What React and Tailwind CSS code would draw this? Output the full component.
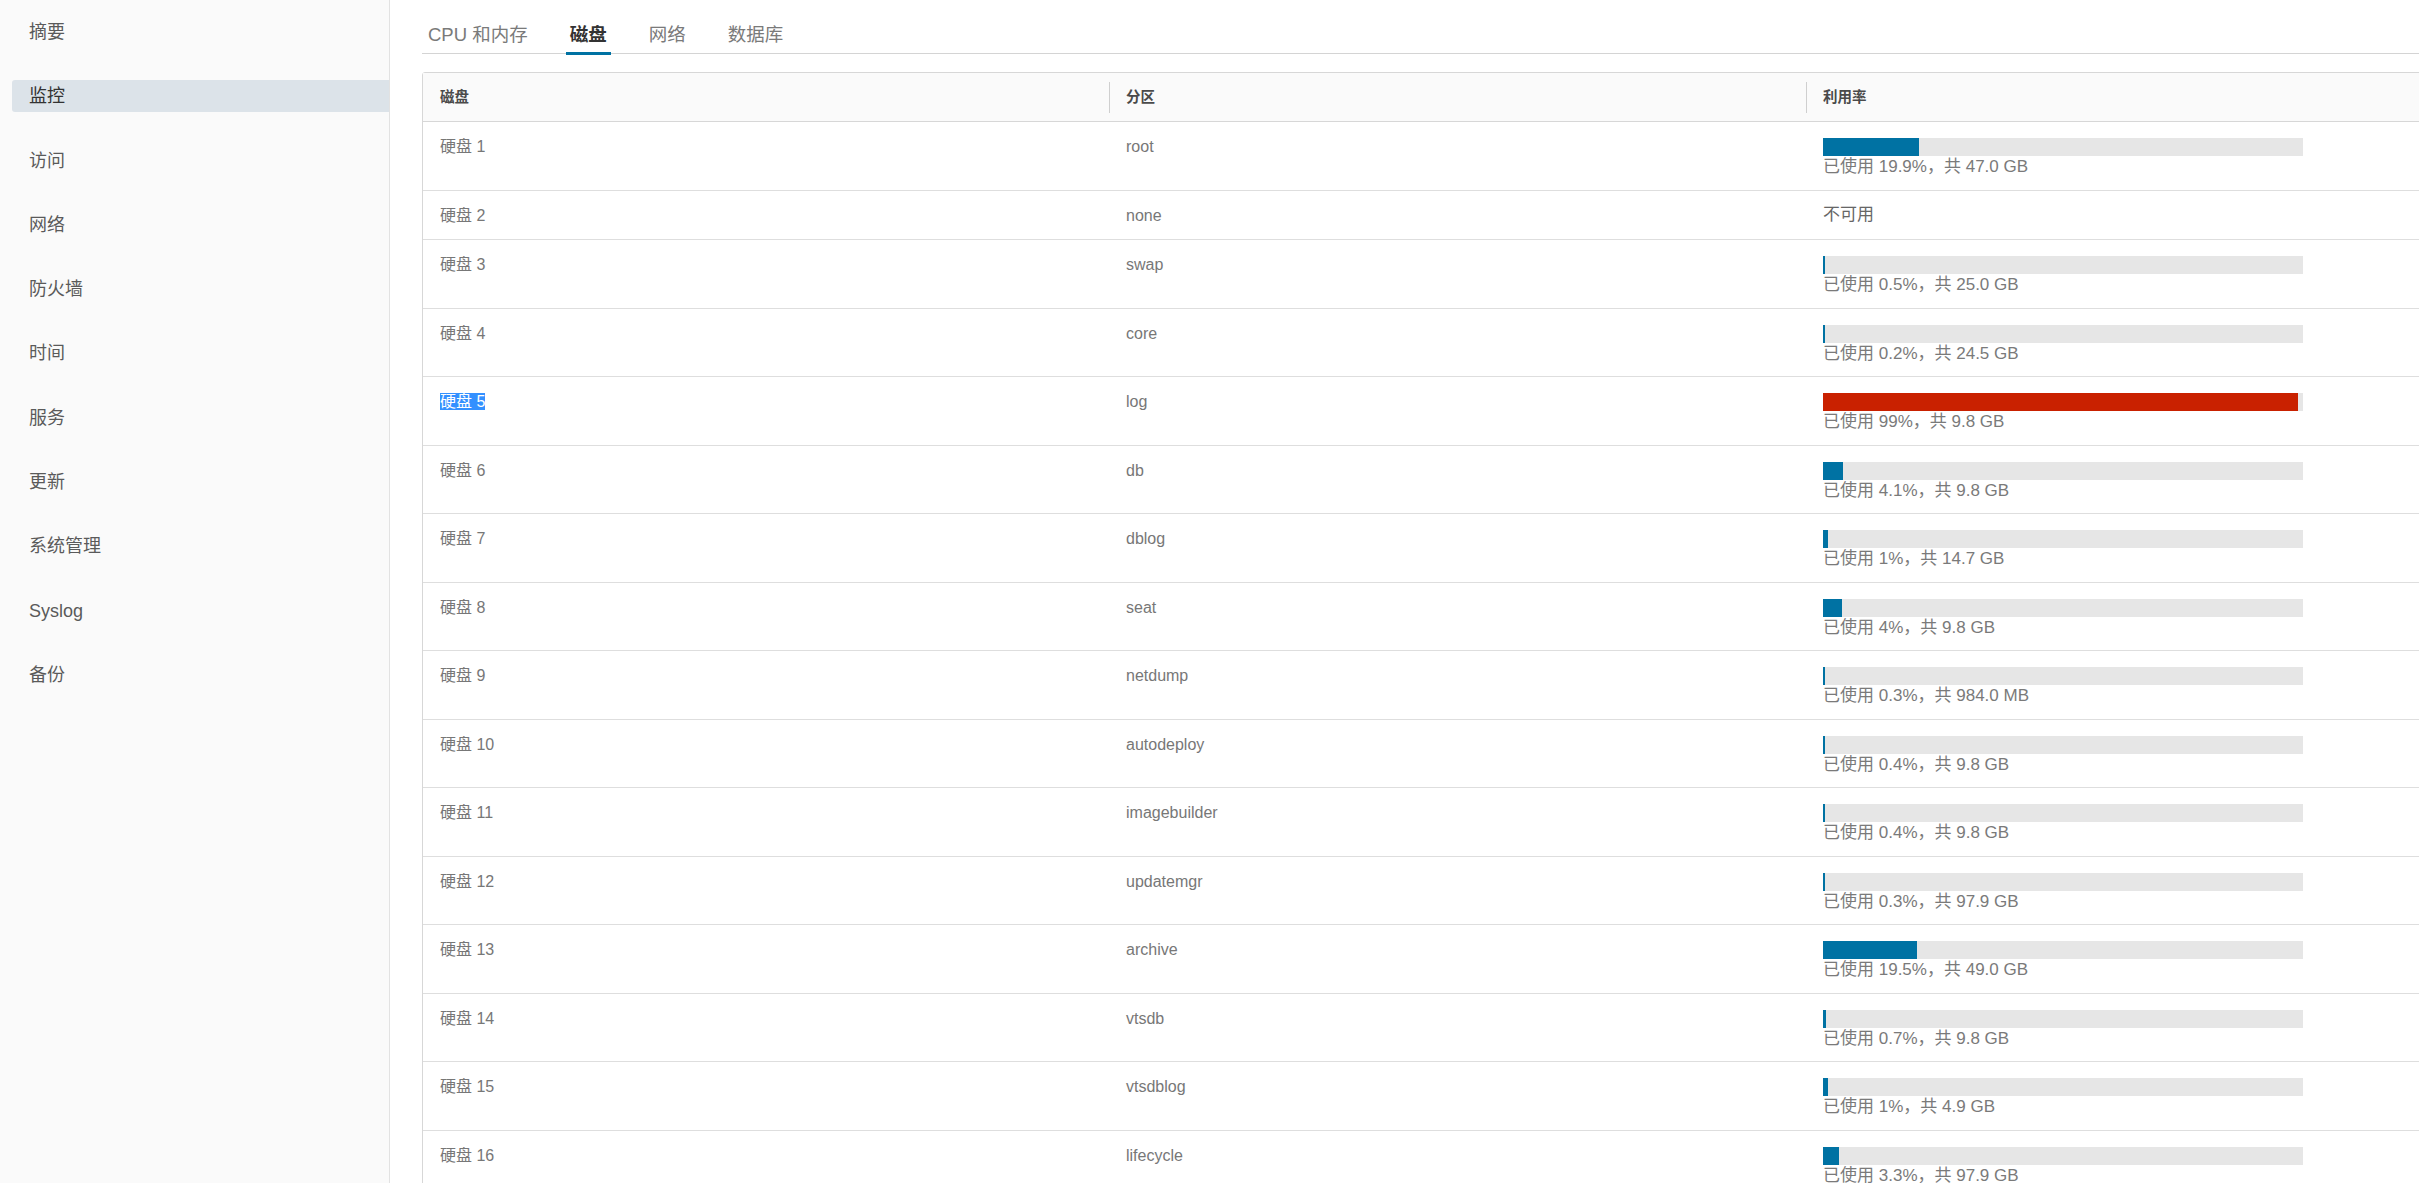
import { useState } from "react";

const FONT = { fontFamily: '"Liberation Sans", "Noto Sans CJK SC", sans-serif' };

const navItems = ["摘要", "监控", "访问", "网络", "防火墙", "时间", "服务", "更新", "系统管理", "Syslog", "备份"];
const tabs = ["CPU 和内存", "磁盘", "网络", "数据库"];

const disks = [
  { part: "root", pct: 19.9, total: "47.0 GB" },
  { part: "none", pct: null },
  { part: "swap", pct: 0.5, total: "25.0 GB" },
  { part: "core", pct: 0.2, total: "24.5 GB" },
  { part: "log", pct: 99, total: "9.8 GB" },
  { part: "db", pct: 4.1, total: "9.8 GB" },
  { part: "dblog", pct: 1, total: "14.7 GB" },
  { part: "seat", pct: 4, total: "9.8 GB" },
  { part: "netdump", pct: 0.3, total: "984.0 MB" },
  { part: "autodeploy", pct: 0.4, total: "9.8 GB" },
  { part: "imagebuilder", pct: 0.4, total: "9.8 GB" },
  { part: "updatemgr", pct: 0.3, total: "97.9 GB" },
  { part: "archive", pct: 19.5, total: "49.0 GB" },
  { part: "vtsdb", pct: 0.7, total: "9.8 GB" },
  { part: "vtsdblog", pct: 1, total: "4.9 GB" },
  { part: "lifecycle", pct: 3.3, total: "97.9 GB" },
];

function UsageBar({ pct, total }) {
  const w = Math.max((pct / 100) * 480, 2);
  return (
    <div className="pt-[16px]">
      <div className="h-[18px] w-[480px] bg-[#e6e6e6]">
        <div className={pct >= 90 ? "h-full bg-[#c92100]" : "h-full bg-[#0072a3]"} style={{ width: w }} />
      </div>
      <div className="text-[17px] leading-[22px] text-[#7a7a7a]">已使用 {pct}%，共 {total}</div>
    </div>
  );
}

export default function App() {
  const [active, setActive] = useState(1);
  const [tab, setTab] = useState(1);

  return (
    <div className="flex h-screen w-full overflow-hidden bg-white" style={FONT}>
      <aside className="w-[390px] shrink-0 border-r border-[#e2e2e2] bg-[#fafafa] pt-[16px]">
        <div className="flex flex-col gap-[32.3px]">
          {navItems.map((n, i) => (
            <div key={n} onClick={() => setActive(i)}
              className={i === active
                ? "ml-[12px] h-[32px] cursor-pointer rounded-l-[3px] bg-[#dce3e9] pl-[17px] text-[18px] leading-[32px] text-[#333]"
                : "ml-[12px] h-[32px] cursor-pointer pl-[17px] text-[18px] leading-[32px] text-[#5a5a5a]"}>
              {n}
            </div>
          ))}
        </div>
      </aside>

      <main className="min-w-0 flex-1 overflow-hidden pl-[32px] pt-[23px]">
        <div className="flex w-[2100px] gap-[34px] border-b border-[#d4d4d4] pl-[2px]">
          {tabs.map((t, i) => (
            <button key={t} onClick={() => setTab(i)}
              className={i === tab
                ? "-mb-[2px] border-b-[3px] border-[#0072a3] px-[4px] pb-[5px] text-[18.5px] font-bold leading-[24px] text-[#333]"
                : "-mb-[2px] border-b-[3px] border-transparent px-[4px] pb-[5px] text-[18.5px] leading-[24px] text-[#7a7a7a]"}>
              {t}
            </button>
          ))}
        </div>

        <div className="mt-[18px] w-[2100px] rounded-tl-[3px] border border-[#d7d7d7]">
          <div className="grid h-[49px] grid-cols-[686px_697px_1fr] border-b border-[#d7d7d7] bg-[#fafafa] text-[14.5px] font-bold text-[#4a4a4a]">
            <div className="flex items-center pl-[17px] pt-[1px]">磁盘</div>
            <div className="flex items-center">
              <div className="flex h-[31px] items-center border-l border-[#cfcfcf] pl-[16px] pt-[1px]">分区</div>
            </div>
            <div className="flex items-center">
              <div className="flex h-[31px] items-center border-l border-[#cfcfcf] pl-[16px] pt-[1px]">利用率</div>
            </div>
          </div>

          {disks.map((d, i) => (
            <div key={i}
              className={(i === 0 ? "h-[69px]" : d.pct === null ? "h-[49px]" : "h-[68.5px]") +
                " grid grid-cols-[686px_697px_1fr] border-b border-[#dedede] text-[16px] text-[#777]"}>
              <div className="pl-[17px] pt-[13px] leading-[24px]">
                {i === 4 ? <span className="bg-[#3390ff] text-white">硬盘 {i + 1}</span> : <span>硬盘 {i + 1}</span>}
              </div>
              <div className="pl-[17px] pt-[13px] leading-[24px]">{d.part}</div>
              <div className="pl-[17px]">
                {d.pct === null
                  ? <div className="pt-[12px] text-[17px] leading-[24px] text-[#666]">不可用</div>
                  : <UsageBar pct={d.pct} total={d.total} />}
              </div>
            </div>
          ))}
        </div>
      </main>
    </div>
  );
}
